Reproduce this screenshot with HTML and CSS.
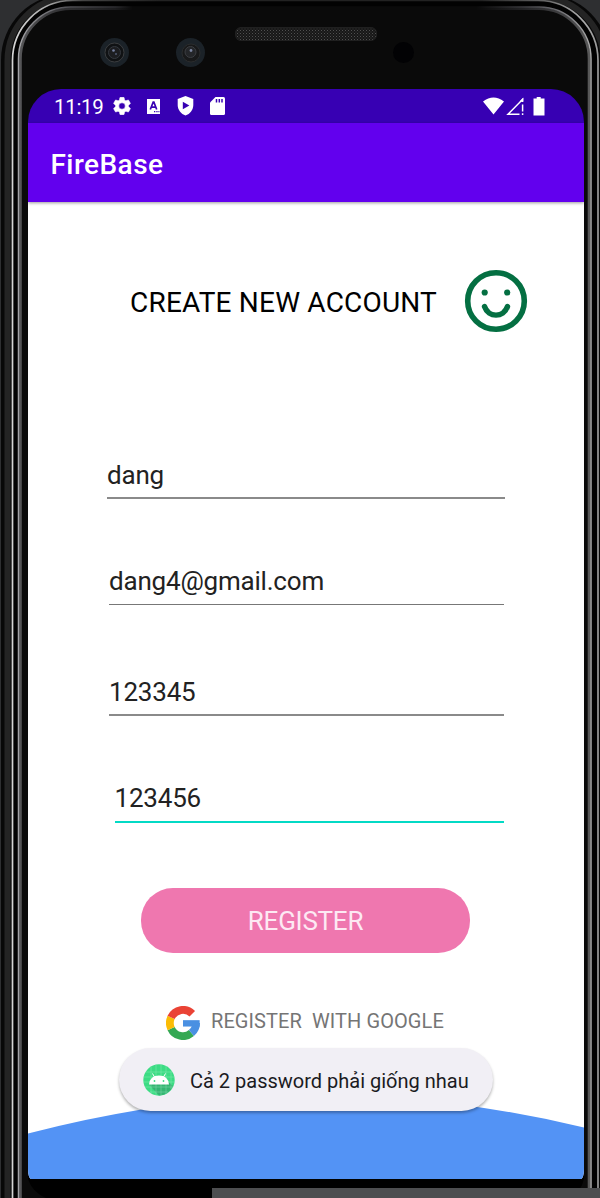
FILE: index.html
```html
<!DOCTYPE html>
<html lang="vi">
<head>
<meta charset="utf-8">
<title>FireBase</title>
<link rel="stylesheet" href="styles.css">
</head>
<body>
<div class="device">
  <svg class="frame" width="600" height="1198" viewBox="0 0 600 1198" fill="none">
    <defs>
      <linearGradient id="fade" gradientUnits="userSpaceOnUse" x1="12" y1="0" x2="598" y2="0">
        <stop offset="0" stop-color="#d5d5d5"/><stop offset=".06" stop-color="#aaa"/><stop offset=".12" stop-color="#444"/><stop offset=".25" stop-color="#222"/>
        <stop offset=".8" stop-color="#222"/><stop offset=".91" stop-color="#666"/><stop offset=".97" stop-color="#aaa"/><stop offset="1" stop-color="#999"/>
      </linearGradient>
      <linearGradient id="fade2" gradientUnits="userSpaceOnUse" x1="18" y1="0" x2="591" y2="0">
        <stop offset="0" stop-color="#a4a4a8"/><stop offset=".08" stop-color="#55555a"/><stop offset=".17" stop-color="#2e2e32"/><stop offset=".2" stop-color="#0a0a0a"/>
        <stop offset=".8" stop-color="#0a0a0a"/><stop offset=".88" stop-color="#3a3a3e"/><stop offset=".95" stop-color="#77777b"/><stop offset="1" stop-color="#aaa"/>
      </linearGradient>
      <pattern id="mesh" width="3" height="3" patternUnits="userSpaceOnUse"><rect width="3" height="3" fill="#171717"/><rect width="1" height="1" fill="#505050"/><rect x="1.5" y="1.5" width="1" height="1" fill="#3b3b3b"/></pattern>
    </defs>
    <rect x="1" y="-6" width="609" height="1300" rx="66" fill="#080808"/>
    <rect x="7.5" y="-2.5" width="596" height="1300" rx="63" stroke="#242424" stroke-width="6"/>
    <rect x="12.5" y=".5" width="585.5" height="1300" rx="60" fill="#020202" stroke="url(#fade)" stroke-width="1.7"/>
    <rect x="18.5" y="7" width="572.5" height="1300" rx="52" fill="#0a0a0a" stroke="url(#fade2)" stroke-width="1.5"/>
    <rect x="20.5" y="8.7" width="568.5" height="1300" rx="50" stroke="url(#fade2)" stroke-width="2.6" opacity=".5"/>
    <rect x="235.500" y="27.500" width="141" height="13" rx="5.500" fill="url(#mesh)" stroke="#202020"/>
    <g><circle cx="114.500" cy="52.500" r="14.500" fill="#1b2228"/><circle cx="114.500" cy="52.500" r="9.500" fill="#101214" stroke="#3b3d3f"/><circle cx="114.500" cy="52.500" r="6" fill="#1c1d20" stroke="#34383e"/><circle cx="113.500" cy="50.500" r="1.300" fill="#7883a4"/><circle cx="116" cy="54" r="1" fill="#515a70"/></g>
    <g><circle cx="190.500" cy="52.500" r="14.500" fill="#1b2228"/><circle cx="191" cy="53" r="9" fill="#18191a" stroke="#2b2c2d"/><circle cx="190.500" cy="52" r="5.500" fill="#242629" stroke="#3c3e42"/><circle cx="191" cy="50.500" r="1.400" fill="#7a84a0"/></g>
    <circle cx="403.500" cy="52.500" r="10.500" fill="#020204"/>
    <path d="M28 1150V1179Q32 1192 46 1198H570Q581 1192 584 1179V1150Z" fill="#000"/>
  </svg>

  <main class="screen">
    <header class="status">
      <span class="clock">11:19</span>
      <svg class="gear" width="18" height="18" viewBox="2 2 20 20"><path fill="#fff" stroke="#fff" stroke-width=".6" d="M19.140 12.940c.04-.3.060-.61.060-.94s-.02-.64-.07-.94l2.030-1.580c.18-.14.230-.41.120-.61l-1.920-3.320c-.12-.22-.37-.29-.59-.22l-2.390.96c-.5-.38-1.030-.7-1.620-.94L14.400 2.810c-.04-.24-.24-.41-.48-.41h-3.840c-.24 0-.43.170-.47.410l-.36 2.540c-.59.240-1.130.570-1.620.94l-2.390-.96c-.22-.08-.47 0-.59.220L2.740 8.870c-.12.210-.08.470.12.610l2.030 1.580c-.05.300-.09.630-.09.940s.02.640.07.94l-2.030 1.580c-.18.140-.23.410-.12.610l1.920 3.320c.12.220.370.290.590.220l2.390-.96c.5.380 1.030.7 1.620.94l.36 2.540c.05.240.240.410.480.410h3.840c.24 0 .44-.17.47-.41l.36-2.540c.59-.24 1.130-.56 1.620-.94l2.390.96c.22.080.470 0 .59-.22l1.920-3.320c.12-.22.070-.47-.12-.61zM12 15.600A3.600 3.600 0 1 1 12 8.400a3.600 3.600 0 0 1 0 7.200z"/></svg>
      <svg class="abox" width="13" height="15" viewBox="0 0 13 15"><path fill="#fff" d="M0 0H13V15H0Z"/><path d="M3.300 10.500 6.200 3.200H6.900L9.700 10.500M4.500 8.200H8.500" fill="none" stroke="#3700b3" stroke-width="1.700"/><path d="M7 12h1.300v1.300H7zM9.300 12h1.300v1.300H9.300zM11.400 12h1v1.300h-1z" fill="#3700b3"/></svg>
      <svg class="shield" width="17" height="20" viewBox="0 0 17 20"><path fill="#fff" d="M8.500 0 16.300 3V9C16.300 14 13 18 8.500 19.500 4 18 .7 14 .7 9V3Z"/><path fill="#3700b3" d="M5.800 5.800V13.200L12.400 9.500Z"/></svg>
      <svg class="sd" width="15" height="18" viewBox="0 0 15 18"><path fill="#fff" d="M5.500 0H13.500Q15 0 15 1.500V16.500Q15 18 13.500 18H1.500Q0 18 0 16.500V5.500Z"/><path stroke="#3700b3" stroke-width="1.500" d="M6.500 2V5.500M9.300 2V5.500M12 2V5.500"/></svg>
      <svg class="signals" width="63" height="20" viewBox="0 0 63 20"><path fill="#fff" d="M0 4.500Q10.500-3.500 21 4.500L10.500 17.500ZM53.700 1.500V0h4V1.500H61.500V18.500H50.500V1.500Z"/><path fill="none" stroke="#fff" stroke-width="1.500" d="M36.500 17.300H25L39.500 2.500V5M39.600 7.500V14.500M39.600 16.300V18.100"/><path fill="#fff" d="M40.300.5V4.500H36.500Z"/></svg>
    </header>
    <div class="appbar">FireBase</div>
    <section class="content">
      <div class="heading">
        <h1>CREATE NEW ACCOUNT</h1>
        <svg width="64" height="64" viewBox="0 0 64 64" fill="none" stroke="#046f42"><circle cx="32" cy="32" r="28.300" stroke-width="5.600"/><path d="M20.500 37.500C24.500 49 39.500 49 43.500 37.500" stroke-width="5.400" stroke-linecap="round"/><g fill="#046f42" stroke="none"><circle cx="20.700" cy="23.500" r="3.100"/><circle cx="43.200" cy="23.500" r="3.100"/></g></svg>
      </div>
      <div class="field name">dang</div>
      <div class="field mail">dang4@gmail.com</div>
      <div class="field pass">123345</div>
      <div class="field confirm">123456</div>
      <button class="register">REGISTER</button>
      <div class="google">
        <svg width="34" height="34" viewBox="0 0 48 48" fill="none" stroke-width="11"><path stroke="#34a853" d="M7.200 31.800A18.500 18.500 0 0 0 35.900 38.200"/><path stroke="#4a90e2" d="M35.900 38.200A18.500 18.500 0 0 0 42.500 24"/><path stroke="#fbbc05" d="M7.200 16.200A18.500 18.500 0 0 0 7.200 31.800"/><path stroke="#ea4335" d="M37.100 10.900A18.500 18.500 0 0 0 7.200 16.200"/><path fill="#4a90e2" d="M24 20H47.500V29H24Z"/></svg>
        <span>REGISTER&nbsp; WITH GOOGLE</span>
      </div>
      <svg class="wave" width="556" height="84" viewBox="0 0 556 84"><path fill="#5393f5" d="M0 38.500Q278-34.500 556 32.500V84H0Z"/></svg>
      <div class="toast">
        <svg width="32" height="32" viewBox="0 0 32 32"><circle cx="16" cy="16" r="15.700" fill="#3ddc84"/><path d="M6 20.500 16 31.500Q26 31 30 22L25.500 18Z" fill="#35b573"/><path d="M8 3V29M13 1V31M18 1V31M23 2V30M28 7V25M3 8H29M1 13H31M1 18H31M2 23H30M7 28H25" stroke="#b5f4d0" stroke-width=".6" opacity=".5"/><path d="M6 20.500Q7 11.500 16 11.500T26 20.500Z" fill="#fff"/><path d="m9.500 9.500 2 3.500M22.500 9.500l-2 3.500" stroke="#fff"/><circle cx="11.500" cy="17" r=".9" fill="#3ddc84"/><circle cx="20.500" cy="17" r=".9" fill="#3ddc84"/></svg>
        <span>Cả 2 password phải giống nhau</span>
      </div>
    </section>
  </main>
  <div class="taskbar"></div>
</div>
</body>
</html>
```
FILE: styles.css
```css
* { box-sizing: border-box; }
body { margin: 0; font-family: Roboto, "Noto Sans", sans-serif; background: #2e2f31; }
.device { position: relative; width: 600px; height: 1198px; padding: 89px 16px 0 28px; overflow: hidden; }
.frame { position: absolute; left: 0; top: 0; }
svg { display: block; flex: none; }
.screen { position: relative; width: 556px; height: 1090px; border-radius: 33px 33px 3px 3px / 33px 33px 10px 10px; overflow: hidden; }
.status { height: 34px; padding-left: 26px; display: flex; background: #3700b3; color: #fff; }
.clock { width: 59px; padding-top: 6px; font-size: 20.5px; letter-spacing: -.3px; line-height: 24px; }
.gear { margin-top: 8px; }
.abox { margin: 10px 0 0 16px; }
.shield { margin: 7px 0 0 17px; }
.sd { margin: 8px 0 0 16px; }
.signals { margin: 8px 0 0 258px; }
.appbar { position: relative; z-index: 1; height: 79px; padding-left: 22.5px; background: #6200ee; color: #fff; font-size: 28px; font-weight: 500; letter-spacing: .45px; line-height: 83px; box-shadow: 0 1px 3px rgba(0,0,0,.4); }
.content { height: 977px; background: #fff; overflow: hidden; }
.heading { display: flex; align-items: center; height: 64px; margin: 66.5px 0 0 102px; }
.heading h1 { margin: 0; padding-top: 5px; width: 333.5px; font-size: 28px; font-weight: 400; letter-spacing: .2px; line-height: 34px; color: #000; white-space: nowrap; }
.field { height: 50px; color: #222; font-size: 26px; letter-spacing: -.2px; line-height: 52px; border-bottom: 2px solid #8a8a8a; }
.name { width: 398px; margin: 116px 0 0 79px; }
.mail { width: 395px; margin: 56px 0 0 81px; border-bottom: 1px solid #777; }
.pass { width: 395px; margin: 61px 0 0 81px; }
.confirm { width: 389.5px; margin: 57px 0 0 86.5px; line-height: 51px; border-color: #03dac5; }
.register { display: block; width: 329px; height: 65px; margin: 65px 0 0 113px; padding: 2px 0 0; border: 0; border-radius: 32px; background: #ef77af; color: #fde9f3; font: 400 26px/63px Roboto, sans-serif; letter-spacing: -.25px; }
.google { display: flex; align-items: center; height: 34px; margin: 53px 0 0 138px; gap: 11px; color: #757575; font-size: 20px; letter-spacing: .08px; }
.google span { padding-bottom: 3px; }
.wave { position: absolute; left: 0; bottom: 0; }
.toast { position: absolute; left: 91px; top: 959px; width: 374px; height: 63px; padding-left: 24px; display: flex; align-items: center; gap: 15px; border-radius: 32px; background: #f1eff5; color: #1b1b1f; font-size: 20px; box-shadow: 0 2px 3px rgba(0,0,0,.3); white-space: nowrap; }
.toast span { padding-top: 3px; }
.taskbar { position: absolute; left: 212px; bottom: 0; width: 388px; height: 10px; background: #4d4e50; }
```
